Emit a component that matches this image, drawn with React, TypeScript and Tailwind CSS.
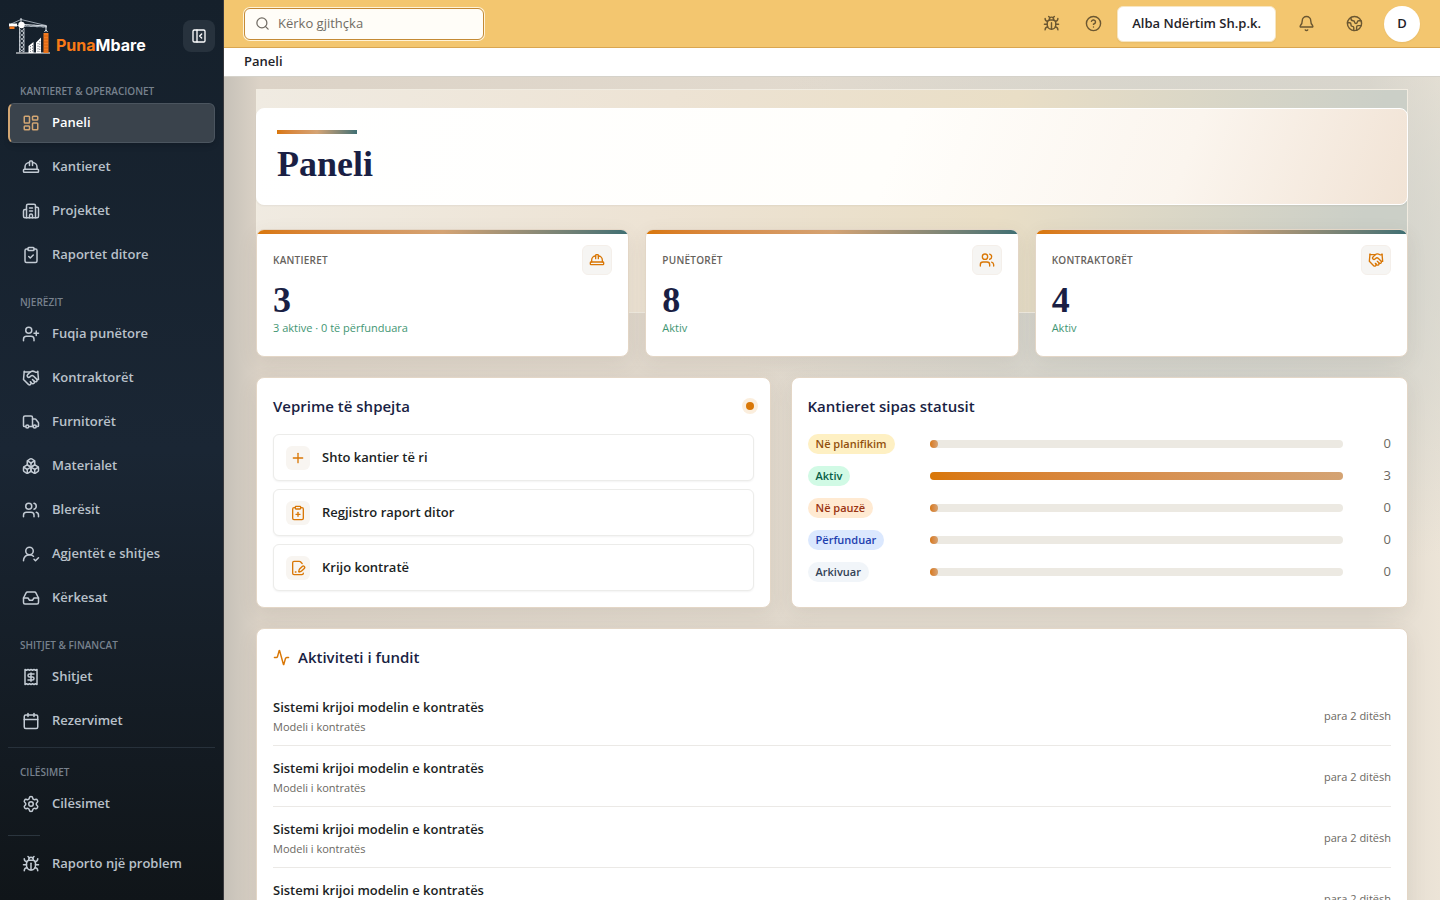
import {
  Activity,
  Bell,
  Boxes,
  Bug,
  Building2,
  Calendar,
  CircleHelp,
  ClipboardCheck,
  ClipboardPlus,
  Earth,
  FilePenLine,
  Handshake,
  HardHat,
  Inbox,
  LayoutDashboard,
  PanelLeftClose,
  Plus,
  Receipt,
  Search,
  Settings,
  Truck,
  UserPlus,
  UserRoundCheck,
  Users,
  type LucideIcon,
} from 'lucide-react'

type NavEntry = { label: string; icon: LucideIcon; active?: boolean }

const operations: NavEntry[] = [
  { label: 'Paneli', icon: LayoutDashboard, active: true },
  { label: 'Kantieret', icon: HardHat },
  { label: 'Projektet', icon: Building2 },
  { label: 'Raportet ditore', icon: ClipboardCheck },
]

const people: NavEntry[] = [
  { label: 'Fuqia punëtore', icon: UserPlus },
  { label: 'Kontraktorët', icon: Handshake },
  { label: 'Furnitorët', icon: Truck },
  { label: 'Materialet', icon: Boxes },
  { label: 'Blerësit', icon: Users },
  { label: 'Agjentët e shitjes', icon: UserRoundCheck },
  { label: 'Kërkesat', icon: Inbox },
]

const sales: NavEntry[] = [
  { label: 'Shitjet', icon: Receipt },
  { label: 'Rezervimet', icon: Calendar },
]

const stats = [
  { label: 'Kantieret', value: 3, note: '3 aktive · 0 të përfunduara', icon: HardHat },
  { label: 'Punëtorët', value: 8, note: 'Aktiv', icon: Users },
  { label: 'Kontraktorët', value: 4, note: 'Aktiv', icon: Handshake },
]

const quickActions = [
  { label: 'Shto kantier të ri', icon: Plus },
  { label: 'Regjistro raport ditor', icon: ClipboardPlus },
  { label: 'Krijo kontratë', icon: FilePenLine },
]

const statuses = [
  { label: 'Në planifikim', count: 0, badge: 'bg-[#fef0c3] text-[#92500e]' },
  { label: 'Aktiv', count: 3, badge: 'bg-[#d1fae5] text-[#066046]' },
  { label: 'Në pauzë', count: 0, badge: 'bg-[#ffead2] text-[#9a3412]' },
  { label: 'Përfunduar', count: 0, badge: 'bg-[#dbe8fe] text-[#1e40af]' },
  { label: 'Arkivuar', count: 0, badge: 'bg-[#f1f5f9] text-[#334155]' },
]

const activity = [1, 2, 3, 4]

const Logo = () => (
  <a href="#" className="flex items-end">
    <svg width="42" height="38" viewBox="0 0 42 38" fill="none" aria-hidden="true">
      <path d="M3 8.500h8M15 9l24 1M13 2.500L3 7M13 2.500l25 6" stroke="#b9c3cd" strokeWidth="0.800" />
      <path d="M15 7.500l24 1.500" stroke="#e8edf2" strokeWidth="1" />
      <path d="M17 9.500l3-2 3 2.300 3-2 3 2.300 3-2 3 2.300 3-1.500" stroke="#b9c3cd" strokeWidth="0.600" />
      <path d="M1 6.500h8v3H1z" fill="#fff" />
      <path d="M1.500 9.500h5v2.500h-5z" fill="#f47b20" />
      <path d="M13 1v4" stroke="#e8edf2" strokeWidth="1" />
      <circle cx="13.500" cy="8" r="3.200" fill="#fff" />
      <path d="M11.500 11v24M16 11v24" stroke="#dce2e8" strokeWidth="0.800" />
      <path d="M11.500 12l4.500 4-4.500 4 4.500 4-4.500 4 4.500 4-4.500 3" stroke="#dce2e8" strokeWidth="0.800" />
      <path d="M16 12l-4.500 4 4.500 4-4.500 4 4.500 4-4.500 4 4.500 3" stroke="#dce2e8" strokeWidth="0.800" />
      <path d="M38 9v4.500M36.500 15l1.500-2 1.500 2" stroke="#e8edf2" strokeWidth="1" />
      <path d="M8 36h34" stroke="#fff" strokeWidth="1.200" />
      <path d="M20.500 29l5-4v11h-5zM28 25.500l5-5V36h-5z" fill="#fff" />
      <path d="M22.500 29v6M24.500 28v7M30 26v9M31.800 24v11" stroke="#17212d" strokeWidth="0.600" strokeDasharray="1.200 1.400" />
      <path d="M35.500 16h5v20h-5z" fill="#f47b20" />
      <path d="M35.500 19h5M35.500 22h5M35.500 25h5M35.500 28h5M35.500 31h5M35.500 34h5" stroke="#b9530c" strokeWidth="0.600" />
    </svg>
    <span className="ml-1.5 font-[Inter,sans-serif] text-base leading-5 font-bold text-[#f97a16]">
      Puna<span className="text-white">Mbare</span>
    </span>
  </a>
)

const NavLabel = ({ children }: { children: string }) => (
  <h2 className="mb-1 px-3 text-[10px] leading-4 font-semibold text-[#77818d] uppercase">{children}</h2>
)

const NavItem = ({ label, icon: Icon, active }: NavEntry) => (
  <a
    href="#"
    aria-current={active ? 'page' : undefined}
    className={
      active
        ? 'flex h-10 items-center gap-3 rounded-md border border-l-2 border-[#4b555f] border-l-[#d2a673] bg-[#3a434c] px-3 text-[13px] font-semibold text-white shadow-md'
        : 'flex h-10 items-center gap-3 rounded-md border border-l-2 border-transparent px-3 text-[13px] font-semibold text-[#b9c1ca]'
    }
  >
    <Icon size={18} className={active ? 'text-[#d2a673]' : 'text-[#c3cbd4]'} />
    {label}
  </a>
)

const NavList = ({ items }: { items: NavEntry[] }) => (
  <ul className="flex flex-col gap-1">
    {items.map((item) => (
      <li key={item.label}>
        <NavItem {...item} />
      </li>
    ))}
  </ul>
)

const Sidebar = () => (
  <aside className="flex w-56 shrink-0 flex-col border-r border-[#3a3a3e] bg-linear-to-b from-[#15202b] via-[#1a2634] to-[#101519] px-2 pt-4">
    <div className="mb-[27px] flex h-10 items-center justify-between">
      <Logo />
      <button type="button" aria-label="Mbyll menunë" className="flex size-8 items-center justify-center rounded-lg bg-[#27323d] text-white">
        <PanelLeftClose size={16} />
      </button>
    </div>
    <nav>
      <NavLabel>Kantieret &amp; Operacionet</NavLabel>
      <NavList items={operations} />
      <div className="mt-[19px]">
        <NavLabel>Njerëzit</NavLabel>
        <NavList items={people} />
      </div>
      <div className="mt-[19px]">
        <NavLabel>Shitjet &amp; Financat</NavLabel>
        <NavList items={sales} />
      </div>
      <div className="mt-1.5 border-t border-[#27313b] pt-4">
        <NavLabel>Cilësimet</NavLabel>
        <NavItem label="Cilësimet" icon={Settings} />
      </div>
      <hr className="mt-[11px] mb-2 w-8 border-[#2b353e]" />
      <NavItem label="Raporto një problem" icon={Bug} />
    </nav>
  </aside>
)

const Header = () => (
  <header className="flex h-12 shrink-0 items-center justify-between border-b border-[#d9a650] bg-[#f3c66f] px-5">
    <label className="flex h-8 w-60 items-center gap-2 rounded-md border border-[#c48a35] bg-[#fffdf8] px-2.5 ring-1 ring-[#fff3d8]">
      <Search size={15} className="shrink-0 text-[#716c64]" />
      <input type="search" aria-label="Kërko" placeholder="Kërko gjithçka" className="w-full bg-transparent text-[13px] outline-none placeholder:text-[#716c64]" />
    </label>
    <div className="flex items-center text-[#6b5731]">
      <button type="button" aria-label="Raporto" className="flex size-8 items-center justify-center">
        <Bug size={17} />
      </button>
      <button type="button" aria-label="Ndihmë" className="mx-2 ml-2.5 flex size-8 items-center justify-center">
        <CircleHelp size={17} />
      </button>
      <button type="button" className="h-9 rounded-md border border-[#f7e6c2] bg-white px-3.5 text-[13px] font-semibold text-[#1f2328] shadow-xs">
        Alba Ndërtim Sh.p.k.
      </button>
      <button type="button" aria-label="Njoftimet" className="mx-3.5 flex size-8 items-center justify-center">
        <Bell size={17} />
      </button>
      <button type="button" aria-label="Gjuha" className="mr-3.5 ml-0.5 flex size-8 items-center justify-center">
        <Earth size={17} />
      </button>
      <button type="button" aria-label="Profili" className="size-9 rounded-full bg-white text-[13px] font-semibold text-[#1f2328] shadow-xs">
        D
      </button>
    </div>
  </header>
)

const Hero = () => (
  <section className="mb-1 rounded-lg border border-white bg-linear-[110deg,#ffffff_0%,#fffefb_55%,#fbf5ee_80%,#f1e3d5_100%] p-5 shadow-xs">
    <div className="mt-px h-1 w-20 bg-linear-to-r from-[#d97706] via-[#d4a373] to-[#3f6f73]" />
    <h1 className="mt-2.5 font-['Liberation_Serif',serif] text-4xl leading-10 font-bold text-[#1a1f44]">Paneli</h1>
  </section>
)

const Stats = () => (
  <section className="grid grid-cols-3 gap-4">
    {stats.map(({ label, value, note, icon: Icon }) => (
      <article key={label} className="overflow-hidden rounded-lg border border-[#e3d6c6] bg-white shadow-[0_6px_20px_rgba(90,80,70,0.09)]">
        <div className="h-1 bg-linear-to-r from-[#d97706] via-[#d4a373] to-[#3f6f73]" />
        <div className="px-4 pt-[11px] pb-5">
          <div className="flex items-center justify-between">
            <h2 className="text-[10px] font-semibold tracking-wide text-[#66625c] uppercase">{label}</h2>
            <span className="flex size-[30px] items-center justify-center rounded-md border border-[#f4efea] bg-[#f6f5f3] text-[#d97706]">
              <Icon size={16} />
            </span>
          </div>
          <p className="mt-[5px] font-['Liberation_Serif',serif] text-4xl leading-10 font-bold text-[#1a1f44]">{value}</p>
          <p className="text-[11px] leading-4 text-[#3f9673]">{note}</p>
        </div>
      </article>
    ))}
  </section>
)

const QuickActions = () => (
  <section className="rounded-lg border border-[#e3d6c6] bg-white p-4 shadow-[0_6px_20px_rgba(90,80,70,0.09)]">
    <div className="mb-4 flex h-6 items-center justify-between">
      <h2 className="text-[15px] font-semibold text-[#1a1f44]">Veprime të shpejta</h2>
      <span className="size-2 rounded-full bg-[#d97706] ring-4 ring-[#fbeedd]" />
    </div>
    <div className="flex flex-col gap-2">
      {quickActions.map(({ label, icon: Icon }) => (
        <button key={label} type="button" className="flex h-[47px] items-center gap-3 rounded-md border border-[#ececea] bg-white px-3 text-[13px] font-semibold text-[#1c1f24] shadow-xs">
          <span className="flex size-6 items-center justify-center rounded-md bg-[#f8f5f1] text-[#d97706]">
            <Icon size={16} />
          </span>
          {label}
        </button>
      ))}
    </div>
  </section>
)

const StatusChart = () => {
  const max = Math.max(...statuses.map((s) => s.count))
  return (
    <section className="rounded-lg border border-[#e3d6c6] bg-white p-4 shadow-[0_6px_20px_rgba(90,80,70,0.09)]">
      <h2 className="mb-4 text-[15px] leading-6 font-semibold text-[#1a1f44]">Kantieret sipas statusit</h2>
      <ul className="flex flex-col gap-3">
        {statuses.map((s) => (
          <li key={s.label} className="grid h-5 grid-cols-[110px_1fr_36px] items-center gap-3">
            <span className={`justify-self-start rounded-full px-2 text-[11px] leading-5 font-semibold ${s.badge}`}>{s.label}</span>
            <div className="h-2 rounded-full bg-[#ece9e2]">
              <div
                className="h-2 min-w-2 rounded-full bg-linear-to-r from-[#d97706] to-[#d4a373]"
                style={{ width: `${(s.count / max) * 100}%` }}
              />
            </div>
            <span className="text-right text-[13px] text-[#6b6862]">{s.count}</span>
          </li>
        ))}
      </ul>
    </section>
  )
}

const RecentActivity = () => (
  <section className="rounded-lg border border-[#e3d6c6] bg-white p-4 shadow-[0_6px_20px_rgba(90,80,70,0.09)]">
    <h2 className="mb-4 flex items-center gap-2 text-[15px] leading-6 font-semibold text-[#1a1f44]">
      <Activity size={17} className="text-[#d97706]" />
      Aktiviteti i fundit
    </h2>
    <ul>
      {activity.map((id) => (
        <li key={id} className="flex items-center justify-between border-b border-[#ebe9e6] pt-3 pb-2.5">
          <div>
            <p className="text-[13px] leading-5 font-semibold text-[#1c1f24]">Sistemi krijoi modelin e kontratës</p>
            <p className="mt-0.5 text-[11px] leading-4 text-[#6b6862]">Modeli i kontratës</p>
          </div>
          <time className="text-[11px] leading-4 text-[#6b6862]">para 2 ditësh</time>
        </li>
      ))}
    </ul>
  </section>
)

const App = () => {
  return (
    <div className="flex h-screen overflow-hidden font-['Open_Sans','Noto_Sans',sans-serif]">
      <Sidebar />
      <div className="flex min-w-0 flex-1 flex-col">
        <Header />
        <nav aria-label="Vendndodhja" className="flex h-[29px] shrink-0 items-center border-b border-[#d5d2ca] bg-white px-5 text-[13px] font-semibold text-[#1f2328]">
          Paneli
        </nav>
        <main className="relative isolate flex-1 overflow-y-auto bg-[radial-gradient(ellipse_at_82%_22%,#cdd0ca_0%,transparent_36%),linear-gradient(90deg,#c6c1b8_0%,#dcd3c7_3%,#e2dace_50%,#e0d9ce_94%,#ece4d7_100%)] px-8 pt-[31px] pb-8 [scrollbar-width:none]">
          {/* tinted panel behind the heading and the top of the stat cards */}
          <div className="absolute inset-x-8 top-3 -z-10 h-56 border border-[#f1ece1] bg-linear-[100deg,#f0ebe2_0%,#ede3d4_35%,#e9dec6_64%,#cbcfc7_95%]" />
          <div className="flex flex-col gap-5">
            <Hero />
            <Stats />
            <div className="grid grid-cols-[5fr_6fr] gap-5">
              <QuickActions />
              <StatusChart />
            </div>
            <RecentActivity />
          </div>
        </main>
      </div>
    </div>
  )
}

export default App
